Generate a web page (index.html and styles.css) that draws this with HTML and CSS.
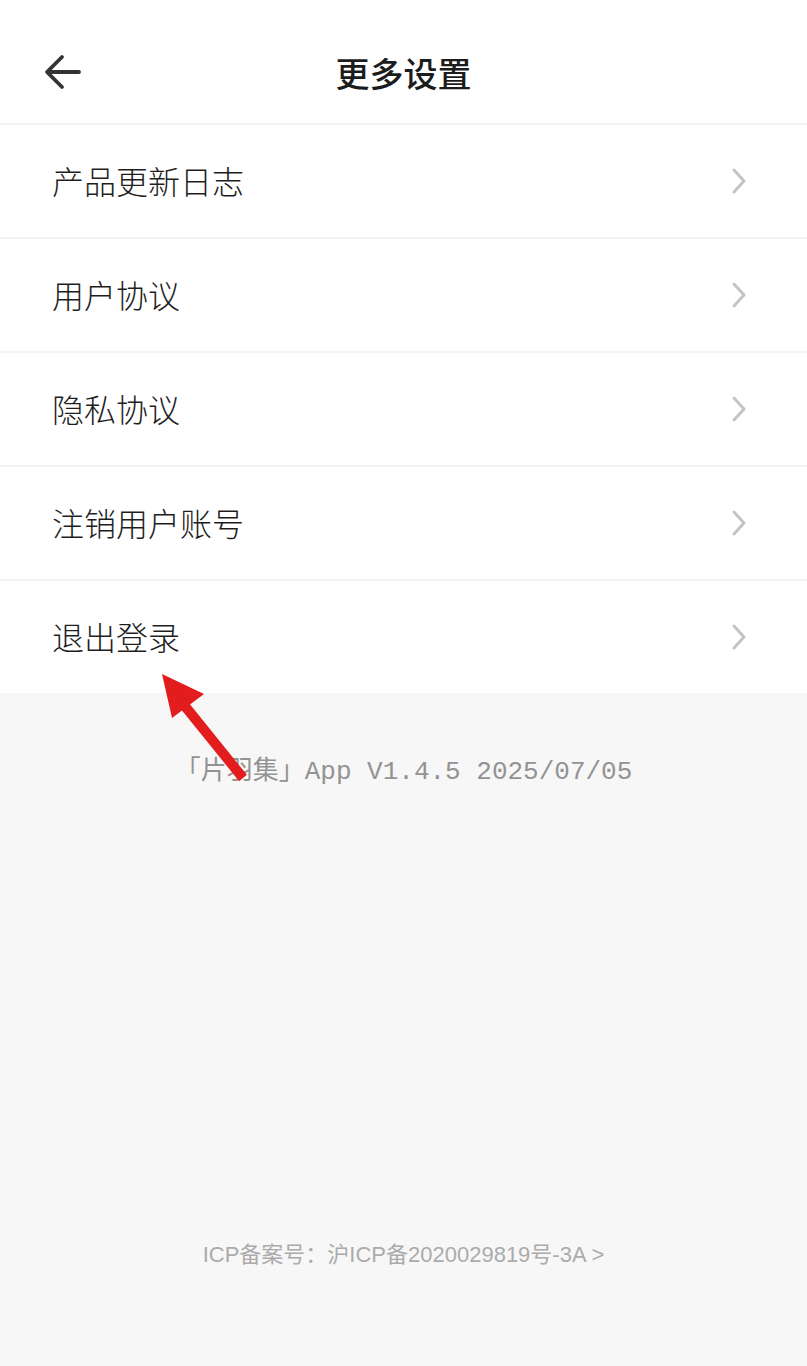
FILE: index.html
```html
<!DOCTYPE html>
<html lang="zh-CN">
<head>
    <meta charset="UTF-8">
    <meta name="viewport" content="width=device-width, initial-scale=1.0">
    <title>更多设置</title>
    <link rel="stylesheet" href="styles.css">
</head>
<body>

    <div class="page">
        <div class="header">
            <svg class="back" width="40" height="40" viewBox="0 0 40 40">
                <path d="M36 20H5M19 5L4 20l15 15" fill="none" stroke="#333" stroke-width="3.8" stroke-linecap="round" stroke-linejoin="round"/>
            </svg>
            <div class="title">更多设置</div>
        </div>

        <div class="list">
            <div class="item"><span>产品更新日志</span><svg class="chevron" width="16" height="28" viewBox="0 0 16 28"><path d="M3 3l10 11L3 25" fill="none" stroke="#c4c4c4" stroke-width="3" stroke-linecap="round" stroke-linejoin="round"/></svg></div>
            <div class="item"><span>用户协议</span><svg class="chevron" width="16" height="28" viewBox="0 0 16 28"><path d="M3 3l10 11L3 25" fill="none" stroke="#c4c4c4" stroke-width="3" stroke-linecap="round" stroke-linejoin="round"/></svg></div>
            <div class="item"><span>隐私协议</span><svg class="chevron" width="16" height="28" viewBox="0 0 16 28"><path d="M3 3l10 11L3 25" fill="none" stroke="#c4c4c4" stroke-width="3" stroke-linecap="round" stroke-linejoin="round"/></svg></div>
            <div class="item"><span>注销用户账号</span><svg class="chevron" width="16" height="28" viewBox="0 0 16 28"><path d="M3 3l10 11L3 25" fill="none" stroke="#c4c4c4" stroke-width="3" stroke-linecap="round" stroke-linejoin="round"/></svg></div>
            <div class="item"><span>退出登录</span><svg class="chevron" width="16" height="28" viewBox="0 0 16 28"><path d="M3 3l10 11L3 25" fill="none" stroke="#c4c4c4" stroke-width="3" stroke-linecap="round" stroke-linejoin="round"/></svg></div>
        </div>

        <div class="footer">
            <div class="version">「片羽集」App V1.4.5 2025/07/05</div>
            <div class="icp">ICP备案号：沪ICP备2020029819号-3A &gt;</div>
        </div>

        <!-- Markierung -->
        <svg class="marker" width="807" height="1366" viewBox="0 0 807 1366">
            <line x1="243" y1="778" x2="180" y2="700" stroke="#e31d1d" stroke-width="10"/>
            <polygon points="162,674 204,694 172,718" fill="#e31d1d"/>
        </svg>
    </div>

</body>
</html>
```

FILE: styles.css
```css
body {
    margin: 0;
    background-color: #f7f7f7;
    font-family: "Noto Sans CJK SC", "Noto Sans", sans-serif;
}

.page {
    position: relative;
    width: 807px;
    height: 1366px;
    overflow: hidden;
    display: flex;
    flex-direction: column;
}

.header {
    position: relative;
    height: 101px;
    padding-top: 22px;
    background-color: #fff;
    border-bottom: 2px solid #f3f3f3;
    display: flex;
    align-items: center;
    justify-content: center;
}

.back {
    position: absolute;
    left: 43px;
    top: 52px;
}

.title {
    font-size: 34px;
    font-weight: 500;
    color: #1c1c1c;
}

.list {
    background-color: #fff;
}

.item {
    height: 112px;
    padding: 0 60px 0 52px;
    display: flex;
    align-items: center;
    justify-content: space-between;
    border-bottom: 2px solid #f3f3f3;
    font-size: 32px;
    font-weight: 300;
    color: #1e1e1e;
}

.item span {
    margin-top: -3px;
}

.item:last-child {
    border-bottom: none;
}

.footer {
    flex: 1;
    display: flex;
    flex-direction: column;
    align-items: center;
}

.version {
    margin-top: 56px;
    font-family: "Liberation Mono", "Noto Sans CJK SC", monospace;
    font-size: 26px;
    color: #939393;
}

.icp {
    margin-top: auto;
    margin-bottom: 98px;
    font-family: "Liberation Sans", "Noto Sans CJK SC", sans-serif;
    font-size: 22px;
    color: #ababab;
}

.marker {
    position: absolute;
    top: 0;
    left: 0;
    pointer-events: none;
}
```
